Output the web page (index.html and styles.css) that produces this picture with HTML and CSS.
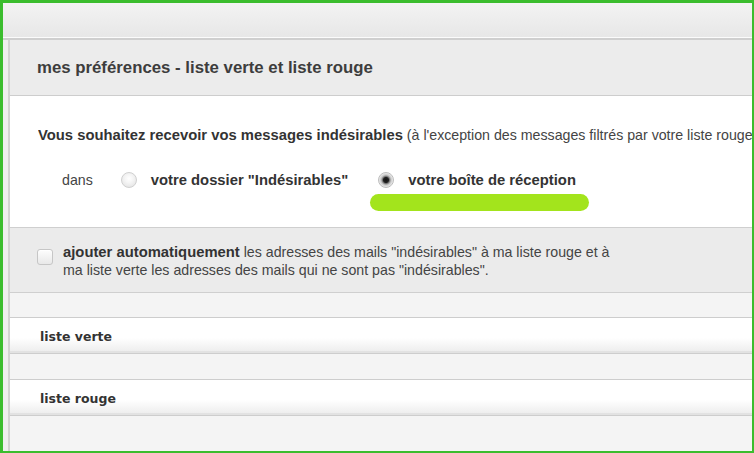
FILE: index.html
```html
<!DOCTYPE html>
<html lang="fr">
<head>
<meta charset="utf-8">
<title>mes préférences</title>
<link rel="stylesheet" href="styles.css">
</head>
<body>
<div class="frame">
  <div class="topbar"></div>
  <div class="main">
    <div class="gutter"></div>
    <div class="content">
      <div class="header">mes préférences - liste verte et liste rouge</div>
      <div class="choice">
        <div class="question"><b>Vous souhaitez recevoir vos messages indésirables</b> (à l'exception des messages filtrés par votre liste rouge)</div>
        <div class="options">
          <span class="dans">dans</span>
          <span class="option"><span class="radio"></span><b>votre dossier "Indésirables"</b></span>
          <span class="option selected"><span class="radio checked"></span><b>votre boîte de réception</b><span class="highlight"></span></span>
        </div>
      </div>
      <div class="auto">
        <span class="checkbox"></span>
        <p class="auto-text"><b>ajouter automatiquement</b> les adresses des mails "indésirables" à ma liste rouge et à ma liste verte les adresses des mails qui ne sont pas "indésirables".</p>
      </div>
      <div class="spacer"></div>
      <div class="list-row">liste verte</div>
      <div class="spacer bordered"></div>
      <div class="list-row">liste rouge</div>
      <div class="spacer last"></div>
    </div>
  </div>
</div>
</body>
</html>
```
FILE: styles.css
```css
html, body {
  margin: 0;
  padding: 0;
}
body {
  font-family: "Liberation Sans", Arial, sans-serif;
  color: #333;
}
.frame {
  width: 754px;
  height: 453px;
  box-sizing: border-box;
  border-style: solid;
  border-color: #3bbd2e;
  border-width: 3px 2px 2px 3px;
  background: #f4f4f4;
  overflow: hidden;
  display: flex;
  flex-direction: column;
}
.topbar {
  height: 34px;
  flex: none;
  background: linear-gradient(#f3f3f3, #e7e7e7);
  border-bottom: 1px solid #fbfbfb;
}
.main {
  flex: 1;
  display: flex;
  border-top: 2px solid #cfcfcf;
  min-height: 0;
}
.gutter {
  width: 5px;
  flex: none;
  background: #efefef;
  border-right: 2px solid #d3d3d3;
}
.content {
  flex: 1;
  min-width: 0;
  display: flex;
  flex-direction: column;
  background: #f4f4f4;
}
.header {
  height: 55px;
  flex: none;
  background: #ececec;
  border-bottom: 1px solid #cdcdcd;
  padding-left: 27px;
  display: flex;
  align-items: center;
  font-weight: bold;
  font-size: 16.8px;
  color: #3d3d3d;
}
.choice {
  flex: none;
  background: #fff;
  padding: 30px 0 38px 28px;
  border-bottom: 1px solid #cfcfcf;
  font-size: 14.2px;
  line-height: 18px;
}
.choice b {
  font-size: 14.8px;
}
.question {
  white-space: nowrap;
  overflow: hidden;
  color: #444;
}
.question b {
  color: #333;
}
.options {
  margin-top: 27px;
  padding-left: 24px;
  display: flex;
  align-items: center;
  gap: 28px;
  height: 18px;
  color: #333;
}
.dans {
  color: #444;
}
.option {
  display: flex;
  align-items: center;
  gap: 14px;
  position: relative;
}
.option.selected {
  margin-left: 2px;
}
.radio {
  width: 16px;
  height: 16px;
  box-sizing: border-box;
  border-radius: 50%;
  border: 1px solid #d0d0d0;
  background: radial-gradient(circle at 50% 40%, #ffffff 0, #f4f4f4 40%, #dedede 100%);
}
.radio.checked {
  border-color: #bdbdbd;
  background: radial-gradient(circle at 50% 50%, #111 0, #222 2.6px, #7a7a7a 3.6px, #c6c6c6 5px, #ececec 7px);
}
.highlight {
  position: absolute;
  left: -8px;
  top: 23px;
  width: 219px;
  height: 17px;
  border-radius: 9px;
  background: #a3e41c;
}
.auto {
  flex: none;
  background: #ebebeb;
  border-bottom: 1px solid #cfcfcf;
  padding: 15px 0 13px 27px;
  display: flex;
  align-items: flex-start;
  gap: 10px;
}
.checkbox {
  flex: none;
  margin-top: 6px;
  width: 16px;
  height: 16px;
  box-sizing: border-box;
  border: 1px solid #c6c6c6;
  border-radius: 3px;
  background: linear-gradient(#fdfdfd, #e8e8e8);
  box-shadow: inset 0 1px 0 #fff;
}
.auto-text {
  margin: 0;
  width: 555px;
  font-size: 14.2px;
  line-height: 18px;
  color: #444;
}
.auto-text b {
  font-size: 14.8px;
  color: #333;
}
.spacer {
  flex: none;
  height: 24px;
  background: #f4f4f4;
  border-bottom: 1px solid #cdcdcd;
}
.spacer.bordered {
  height: 25px;
  border-top: 1px solid #cdcdcd;
}
.spacer.last {
  flex: 1;
  border-bottom: 0;
  border-top: 1px solid #cdcdcd;
}
.list-row {
  flex: none;
  height: 35px;
  box-sizing: border-box;
  padding: 3px 0 0 30px;
  display: flex;
  align-items: center;
  background: linear-gradient(#ffffff 0, #ffffff 60%, #eeeeee 100%);
  border-bottom: 2px solid #e2e2e2;
  font-family: "DejaVu Sans", Verdana, sans-serif;
  font-weight: bold;
  font-size: 12.5px;
  color: #333;
}
```
